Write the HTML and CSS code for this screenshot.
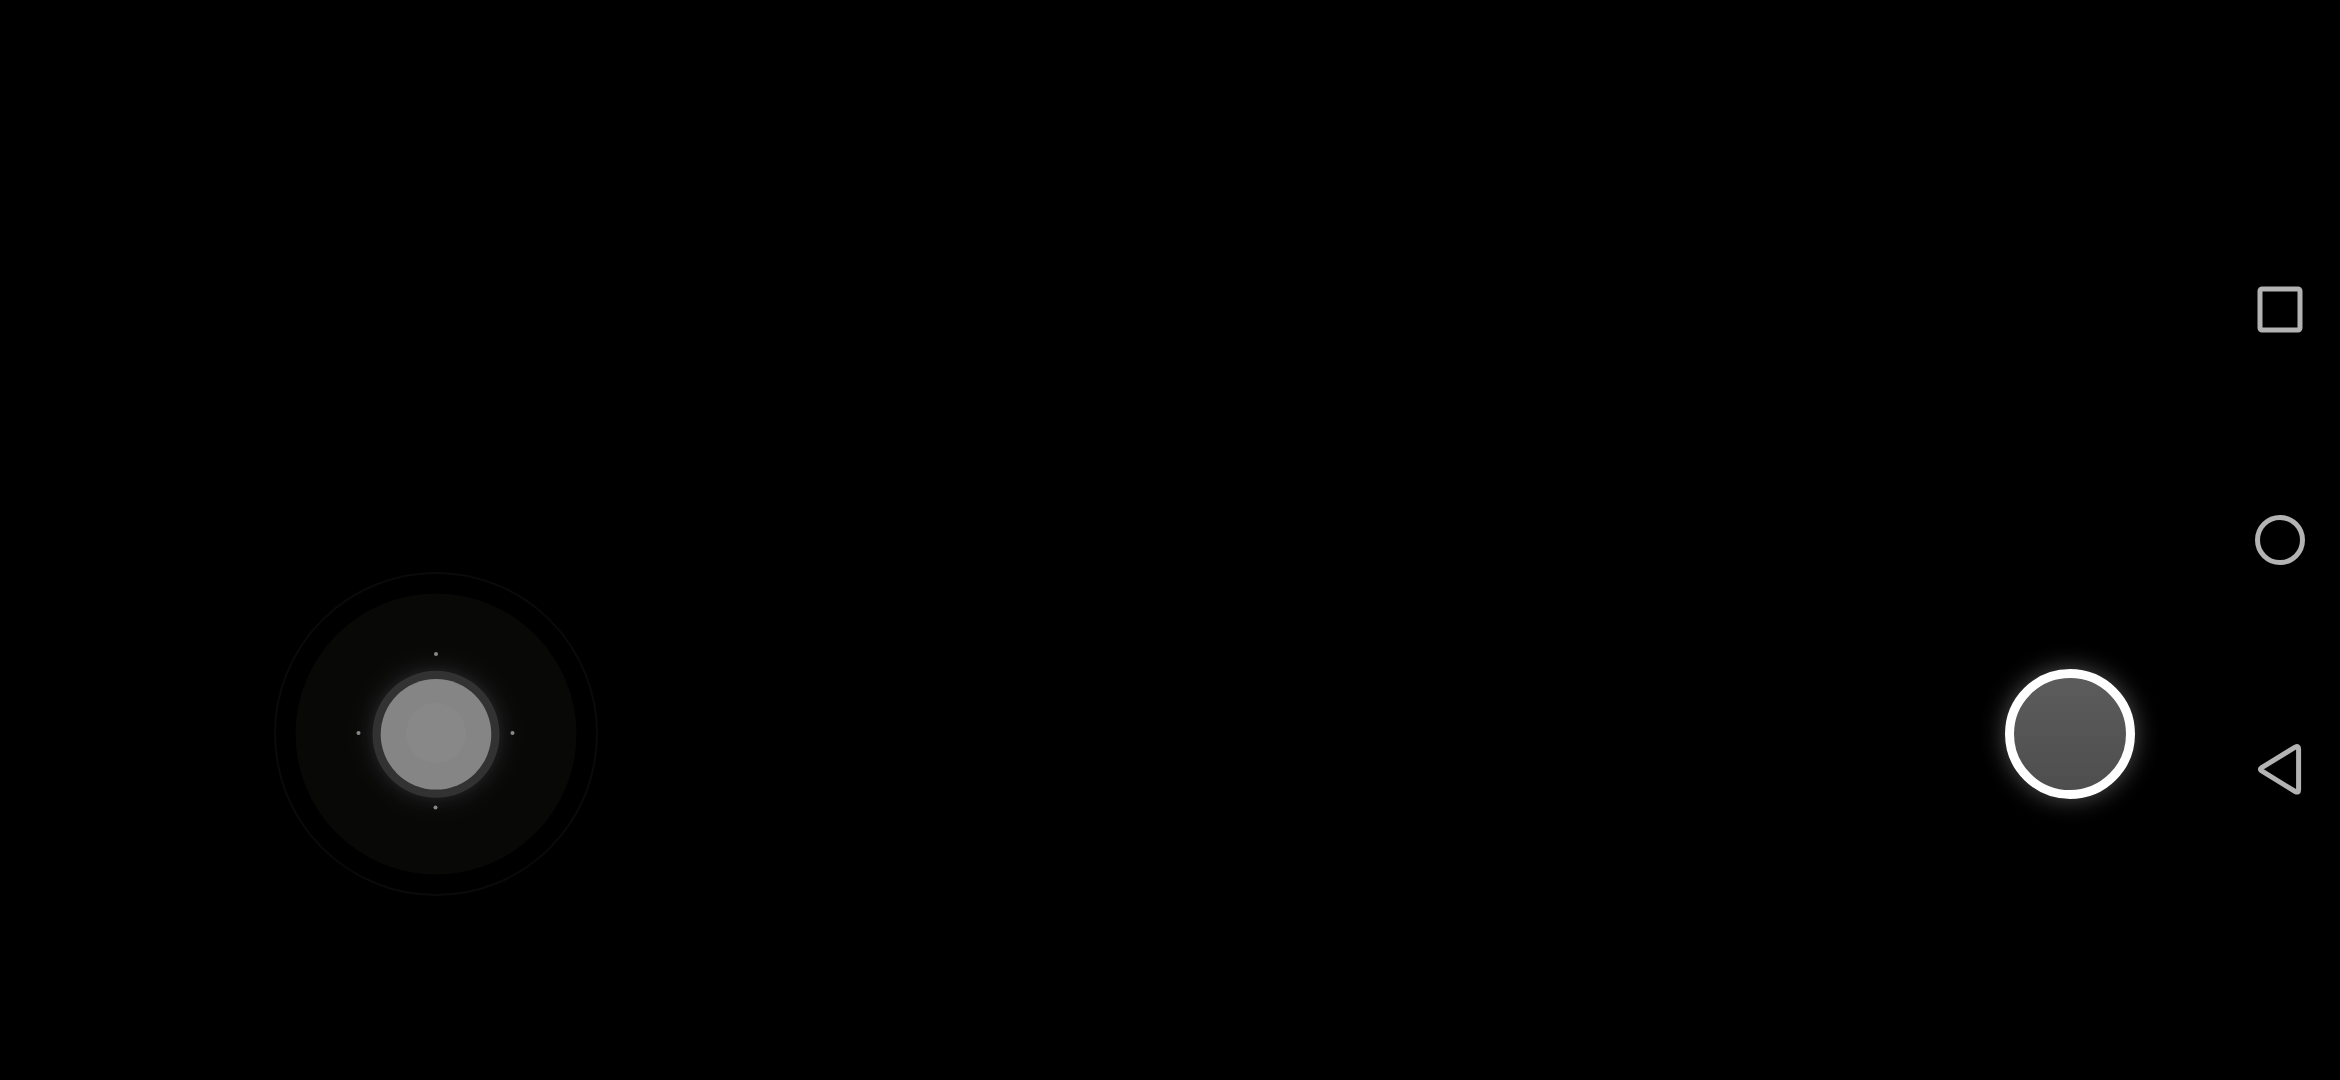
FILE: index.html
```html
<!doctype html>
<html lang="en">
 <head>
  <meta charset="UTF-8">
  <meta name="viewport" content="width=device-width, initial-scale=1">
  <title>Controller</title>
  <link rel="stylesheet" href="styles.css">
 </head>
 <body>

  <main class="pad">
   <!-- movement stick -->
   <button type="button" class="stick" aria-label="Move">
    <svg viewBox="0 0 324 324">
     <defs>
      <radialGradient id="glow">
       <stop offset="0.7" stop-color="#1a1a1a"/>
       <stop offset="0.78" stop-color="#101010"/>
       <stop offset="0.88" stop-color="#0a0a09"/>
       <stop offset="1" stop-color="#080806"/>
      </radialGradient>
     </defs>
     <circle cx="162" cy="162" r="161" fill="none" stroke="#0a0a0a" stroke-width="2"/>
     <circle cx="162" cy="162" r="140.5" fill="#080806"/>
     <circle cx="162" cy="162" r="90" fill="url(#glow)"/>
     <g fill="#888">
      <circle cx="162" cy="82" r="2"/>
      <circle cx="84.5" cy="161" r="2"/>
      <circle cx="238.5" cy="161" r="2"/>
      <circle cx="161.5" cy="235.5" r="2"/>
     </g>
     <circle cx="162" cy="162.3" r="63.5" fill="#323232"/>
     <circle cx="162" cy="162.3" r="55.3" fill="#858585"/>
     <circle cx="162" cy="161" r="30" fill="#888"/>
    </svg>
   </button>

   <button type="button" class="action" aria-label="Action"></button>
  </main>

  <nav class="navbar">
   <button type="button" aria-label="Recent apps">
    <svg viewBox="0 0 80 80"><rect x="20" y="19" width="40" height="41" rx="2"/></svg>
   </button>
   <button type="button" aria-label="Home">
    <svg viewBox="0 0 80 80"><circle cx="40" cy="40" r="22.5"/></svg>
   </button>
   <button type="button" aria-label="Back">
    <svg viewBox="0 0 80 80"><path d="M21.3 37.9 55.2 17.1Q58.6 15.3 58.6 18.9V59.7Q58.6 63.3 55.2 61.5L21.3 40.7Q19.4 39.3 21.3 37.9Z"/></svg>
   </button>
  </nav>

 </body>
</html>
```
FILE: styles.css
```css
*
{
  margin: 0;
  padding: 0;
  box-sizing: border-box;
}
body
{
  display: flex;
  min-height: 100vh;
  background: #000;
  overflow: hidden;
}
button
{
  border: none;
  background: none;
  cursor: pointer;
}
svg
{
  display: block;
  width: 100%;
  height: 100%;
}
.pad
{
  flex: 1;
  align-self: flex-end;
  display: flex;
  justify-content: space-between;
  align-items: center;
  padding: 0 85px 184px 274px;
}
.stick
{
  width: 324px;
  height: 324px;
  border-radius: 50%;
}
.action
{
  width: 130px;
  height: 130px;
  border: 9px solid #fff;
  border-radius: 50%;
  background: linear-gradient(#5c5c5c, #4e4e4e);
  box-shadow: 0 0 24px rgba(255,255,255,0.32);
}
.navbar
{
  width: 120px;
  display: flex;
  flex-direction: column;
  justify-content: center;
  align-items: center;
  gap: 150px;
}
.navbar button
{
  width: 80px;
  height: 80px;
}
.navbar svg
{
  fill: none;
  stroke: #b3b3b3;
  stroke-width: 5;
  stroke-linejoin: round;
}
```
